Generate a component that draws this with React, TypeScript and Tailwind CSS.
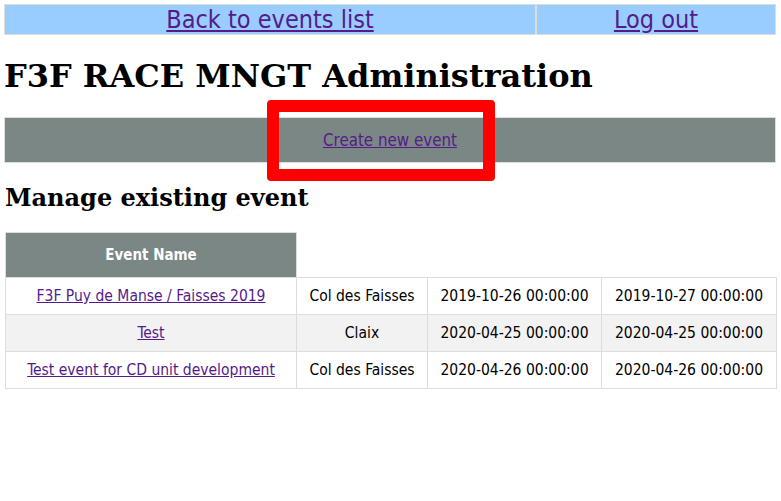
import React from 'react';

type EventRow = { name: string; place: string; start: string; end: string };

const events: EventRow[] = [
  { name: 'F3F Puy de Manse / Faisses 2019', place: 'Col des Faisses', start: '2019-10-26 00:00:00', end: '2019-10-27 00:00:00' },
  { name: 'Test', place: 'Claix', start: '2020-04-25 00:00:00', end: '2020-04-25 00:00:00' },
  { name: 'Test event for CD unit development', place: 'Col des Faisses', start: '2020-04-26 00:00:00', end: '2020-04-26 00:00:00' },
];

const sans = "font-['DejaVu_Sans_Condensed','DejaVu_Sans',Verdana,sans-serif]";
const serif = "font-['DejaVu_Serif','Liberation_Serif',serif]";
const link = 'text-[#551a8b] underline';

const App: React.FC = () => (
  <div className={`${sans} relative min-h-[501px] bg-white px-[4px] pt-[4px] text-[15.5px] text-black`}>
    <table className="w-[772px] border-separate border-spacing-0">
      <tbody>
        <tr>
          <td className="w-[532px] border border-[#dddddd] bg-[#99ccff] text-center text-[25px] leading-[29px]">
            <a href="#" className={link}>Back to events list</a>
          </td>
          <td className="border border-[#dddddd] bg-[#99ccff] text-center text-[25px] leading-[29px]">
            <a href="#" className={link}>Log out</a>
          </td>
        </tr>
      </tbody>
    </table>

    <h1 className={`${serif} mt-[21px] text-[32px] font-bold leading-[40px]`}>F3F RACE MNGT Administration</h1>

    <div className="mt-[21px] w-[772px] border border-[#dddddd] bg-[#7b8784] py-3 text-center text-[16.8px] leading-[20px]">
      <a href="#" className={link}>Create new event</a>
    </div>

    <h2 className={`${serif} mt-[20px] pl-px text-[24px] font-bold leading-[30px]`}>Manage existing event</h2>

    <table className="mt-[19px] ml-px w-[771px] table-fixed border-collapse">
      <colgroup>
        <col className="w-[291px]" />
        <col className="w-[131px]" />
        <col className="w-[174px]" />
        <col className="w-[175px]" />
      </colgroup>
      <thead>
        <tr>
          <th className="border border-[#dddddd] bg-[#7b8784] py-3 text-center text-[15px] font-bold leading-[20px] text-white">Event Name</th>
          <th className="border-0" />
          <th className="border-0" />
          <th className="border-0" />
        </tr>
      </thead>
      <tbody>
        {events.map((e, i) => (
          <tr key={e.name} className={i % 2 === 1 ? 'bg-[#f2f2f2]' : ''}>
            <td className="border border-[#dddddd] py-2 text-center leading-[20px]">
              <a href="#" className={link}>{e.name}</a>
            </td>
            <td className="border border-[#dddddd] py-2 text-center leading-[20px]">{e.place}</td>
            <td className="border border-[#dddddd] py-2 text-center leading-[20px]">{e.start}</td>
            <td className="border border-[#dddddd] py-2 text-center leading-[20px]">{e.end}</td>
          </tr>
        ))}
      </tbody>
    </table>

    {/* annotation box drawn over the create button */}
    <div className="pointer-events-none absolute left-[267px] top-[100px] h-[81px] w-[228px] rounded-[4px] border-[12px] border-[#ff0000]" />
  </div>
);

export default App;
